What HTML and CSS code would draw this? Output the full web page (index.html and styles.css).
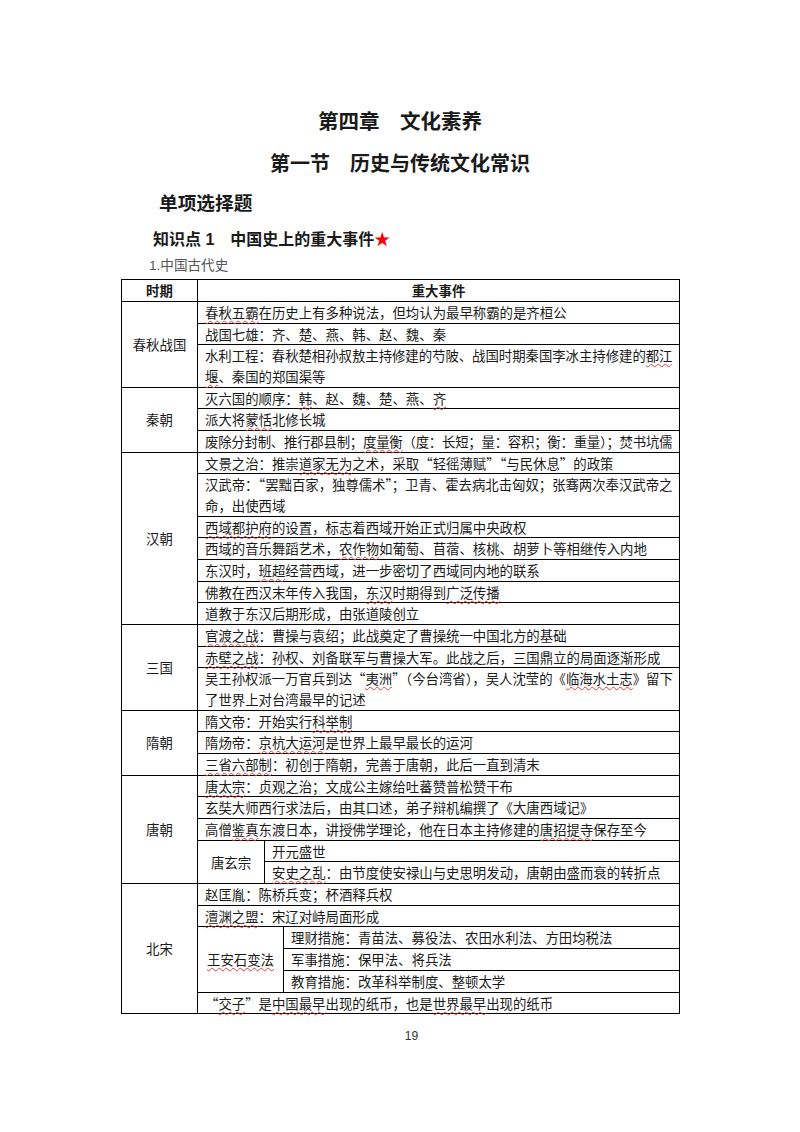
FILE: index.html
```
<!DOCTYPE html>
<html lang="zh-CN">
<head>
    <meta charset="UTF-8">
    <meta name="viewport" content="width=device-width, initial-scale=1.0">
    <title>第四章 文化素养</title>
    <link rel="stylesheet" href="styles.css">
</head>
<body>
    <div class="page">
        <h1 class="chapter">第四章　文化素养</h1>
        <h2 class="section">第一节　历史与传统文化常识</h2>
        <h3 class="part">单项选择题</h3>
        <h4 class="point">知识点 1　中国史上的重大事件<span class="star">★</span></h4>
        <p class="sub-title">1.中国古代史</p>

        <div class="history">
            <div class="head">
                <div class="head-cell">时期</div>
                <div class="head-cell">重大事件</div>
            </div>

            <div class="era">
                <div class="era-name">春秋战国</div>
                <div class="events">
                    <div class="ev"><span class="sp">春秋五霸</span>在历史上有多种说法，但均认为最早称霸的是齐桓公</div>
                    <div class="ev">战国七雄：齐、楚、燕、韩、赵、魏、秦</div>
                    <div class="ev">
                        <span class="full tight">水利工程：春秋楚相孙叔敖主持修建的芍陂、战国时期秦国李冰主持修建的<span class="sp">都江</span></span>
                        <span class="sp">堰</span>、秦国的郑国渠等
                    </div>
                </div>
            </div>

            <div class="era">
                <div class="era-name">秦朝</div>
                <div class="events">
                    <div class="ev">灭六国的顺序：<span class="sp">韩</span>、赵、魏、楚、燕、<span class="sp">齐</span></div>
                    <div class="ev">派大将<span class="sp">蒙恬</span>北修长城</div>
                    <div class="ev"><span class="full tight">废除分封制、推行郡县制；<span class="sp">度量衡</span>（度：长短；量：容积；衡：重量）；焚书坑儒</span></div>
                </div>
            </div>

            <div class="era">
                <div class="era-name">汉朝</div>
                <div class="events">
                    <div class="ev">文景之治：推崇<span class="sp">道家无为</span>之术，采取“轻徭薄赋”“与民休息”的政策</div>
                    <div class="ev">
                        <span class="full tight">汉武帝：“罢黜百家，独尊儒术”；卫青、霍去病北击匈奴；张骞两次奉汉武帝之</span>
                        命，出使西域
                    </div>
                    <div class="ev"><span class="sp">西域都护府</span>的设置，标志着西域开始正式归属中央政权</div>
                    <div class="ev">西域的音乐舞蹈艺术，<span class="sp">农作物</span>如葡萄、苜蓿、核桃、胡萝卜等相继传入内地</div>
                    <div class="ev">东汉时，<span class="sp">班超</span>经营西域，进一步密切了西域同内地的联系</div>
                    <div class="ev">佛教在西汉末年传入我国，<span class="sp">东汉</span>时期得到<span class="sp">广泛传播</span></div>
                    <div class="ev">道教于东汉后期形成，由张道陵创立</div>
                </div>
            </div>

            <div class="era">
                <div class="era-name">三国</div>
                <div class="events">
                    <div class="ev"><span class="sp">官渡之战</span>：曹操与袁绍；此战奠定了曹操统一中国北方的基础</div>
                    <div class="ev"><span class="sp">赤壁之战</span>：孙权、刘备联军与曹操大军。此战之后，三国鼎立的局面逐渐形成</div>
                    <div class="ev">
                        <span class="full tighter">吴王孙权派一万官兵到达“<span class="sp">夷洲</span>”（今台湾省），吴人沈莹的《<span class="sp">临海水土志</span>》留下</span>
                        了世界上对台湾最早的记述
                    </div>
                </div>
            </div>

            <div class="era">
                <div class="era-name">隋朝</div>
                <div class="events">
                    <div class="ev">隋文帝：开始实行<span class="sp">科举制</span></div>
                    <div class="ev">隋炀帝：<span class="sp">京杭大运河</span>是世界上最早最长的运河</div>
                    <div class="ev"><span class="sp">三省六部制</span>：初创于隋朝，完善于唐朝，此后一直到清末</div>
                </div>
            </div>

            <div class="era">
                <div class="era-name">唐朝</div>
                <div class="events">
                    <div class="ev"><span class="sp">唐太宗</span>：贞观之治；文成公主嫁给吐蕃赞普松赞干布</div>
                    <div class="ev">玄奘大师西行求法后，由其口述，弟子辩机编撰了《大唐西域记》</div>
                    <div class="ev">高僧<span class="sp">鉴真</span>东渡日本，讲授佛学理论，他在日本主持修建的<span class="sp">唐招提寺</span>保存至今</div>
                    <div class="ev split split-tang">
                        <div class="sub-name">唐玄宗</div>
                        <div class="events">
                            <div class="ev">开元盛世</div>
                            <div class="ev"><span class="sp">安史之乱</span>：由节度使安禄山与史思明发动，唐朝由盛而衰的转折点</div>
                        </div>
                    </div>
                </div>
            </div>

            <div class="era">
                <div class="era-name">北宋</div>
                <div class="events">
                    <div class="ev">赵匡胤：陈桥兵变；杯酒释兵权</div>
                    <div class="ev"><span class="sp">澶渊之盟</span>：宋辽对峙局面形成</div>
                    <div class="ev split split-song">
                        <div class="sub-name"><span class="sp">王安石变法</span></div>
                        <div class="events">
                            <div class="ev">理财措施：青苗法、募役法、农田水利法、方田均税法</div>
                            <div class="ev">军事措施：保甲法、将兵法</div>
                            <div class="ev">教育措施：改革科举制度、整顿太学</div>
                        </div>
                    </div>
                    <div class="ev">“<span class="sp">交子</span>”是<span class="sp">中国最早</span>出现的纸币，也是<span class="sp">世界最早</span>出现的纸币</div>
                </div>
            </div>
        </div>

        <div class="page-num">19</div>
    </div>
</body>
</html>
```

FILE: styles.css
```
* {
    margin: 0;
    padding: 0;
    box-sizing: border-box;
}

body {
    font-family: "Noto Sans CJK SC", sans-serif;
    color: #1a1a1a;
    background: #fff;
}

.page {
    width: 800px;
    height: 1132px;
    padding-top: 106px;
}

/* headings */

.chapter,
.section {
    font-size: 20.5px;
    line-height: 28px;
    font-weight: 700;
    text-align: center;
}

.section {
    font-size: 20px;
    margin-top: 15px;
}

.part {
    font-size: 18.7px;
    line-height: 26px;
    font-weight: 700;
    margin-top: 12px;
    padding-left: 159px;
}

.point {
    font-family: "Liberation Sans", "Noto Sans CJK SC", sans-serif;
    font-size: 16px;
    line-height: 22px;
    font-weight: 700;
    margin-top: 12px;
    padding-left: 153px;
}

.star {
    color: #ff0000;
    font-family: "Noto Sans CJK SC", sans-serif;
}

.sub-title {
    font-family: "Liberation Sans", "Noto Sans CJK SC", sans-serif;
    font-size: 13.6px;
    line-height: 20px;
    color: #555;
    margin-top: 5px;
    padding-left: 149px;
}

/* table */

.history {
    width: 559px;
    margin: 3px 0 0 121px;
    border: 1px solid #000;
    font-size: 13.4px;
    line-height: 20.67px;
}

.head {
    display: grid;
    grid-template-columns: 76px 1fr;
    border-bottom: 1px solid #000;
}

.head-cell {
    font-weight: 700;
    text-align: center;
    line-height: 21px;
}

.head-cell:first-child {
    border-right: 1px solid #000;
}

.era {
    display: grid;
    grid-template-columns: 76px 1fr;
    border-bottom: 1px solid #000;
}

.era:last-child {
    border-bottom: 0;
}

.era-name,
.sub-name {
    display: flex;
    align-items: center;
    justify-content: center;
    border-right: 1px solid #000;
}

.ev {
    padding: 0 7px;
    border-bottom: 1px solid #000;
}

.ev:last-child {
    border-bottom: 0;
}

.split {
    display: grid;
    padding: 0;
}

.split-tang {
    grid-template-columns: 67px 1fr;
}

.split-song {
    grid-template-columns: 86px 1fr;
}

.full {
    display: block;
    text-align: justify;
    text-align-last: justify;
}

.tight {
    letter-spacing: -0.5px;
}

.tighter {
    letter-spacing: -0.85px;
}

/* word's spell check squiggles */
.sp {
    text-decoration: underline wavy #e23b3b;
    text-decoration-thickness: 1px;
    text-underline-offset: 2px;
}

.page-num {
    font-family: "Liberation Sans", sans-serif;
    font-size: 12px;
    line-height: 16px;
    color: #333;
    text-align: center;
    padding-left: 23px;
    margin-top: 14px;
}
```
